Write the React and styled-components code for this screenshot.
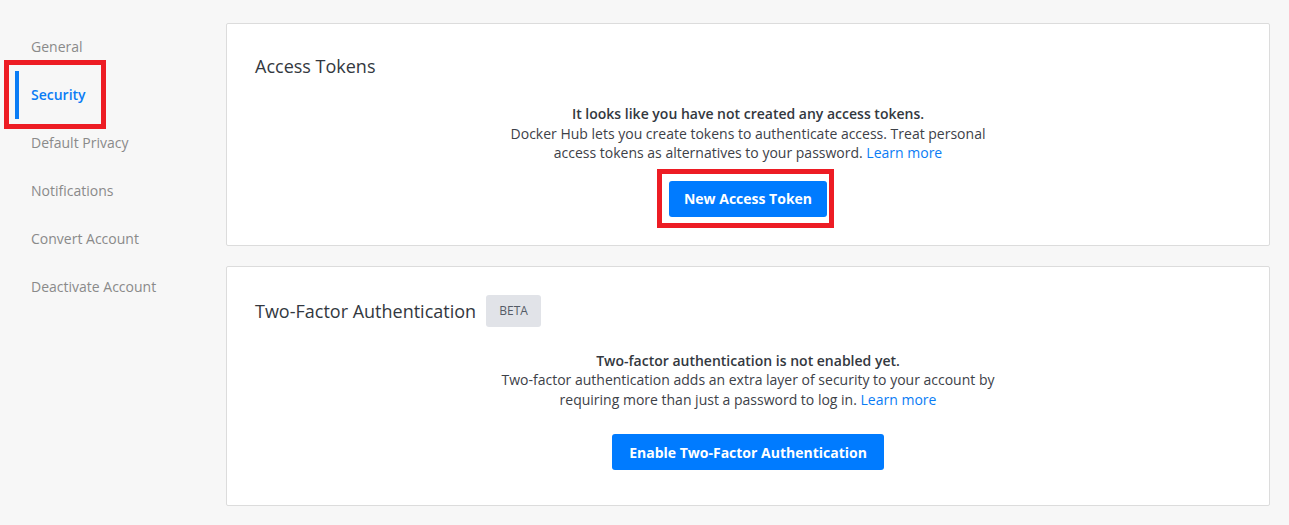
import React from 'react'
import styled, { createGlobalStyle } from 'styled-components'

const GlobalStyle = createGlobalStyle`
    body {
        margin: 0;
        background: #f7f7f7;
        font-family: "Open Sans", "Noto Sans", sans-serif;
    }
`

const navItems = ['General', 'Security', 'Default Privacy', 'Notifications', 'Convert Account', 'Deactivate Account']

const Settings = () => {
    return (
        <Page>
            <GlobalStyle />
            <SideNav>
                {navItems.map((item) => (
                    <NavItem key={item} active={item === 'Security'}>
                        {item}
                        {item === 'Security' && <Highlight inset='-11px 120px -10px 4px' />}
                    </NavItem>
                ))}
            </SideNav>
            <Main>
                <Card top='26px' bottom='28px'>
                    <CardTitle>Access Tokens</CardTitle>
                    <Body top='22px'>
                        <Lead>It looks like you have not created any access tokens.</Lead>
                        <Text>
                            Docker Hub lets you create tokens to authenticate access. Treat personal
                            access tokens as alternatives to your password. <Link href='#'>Learn more</Link>
                        </Text>
                        <Button gap='18px' width='158px'>
                            New Access Token
                            <Highlight inset='-12px -7px -11px -12px' />
                        </Button>
                    </Body>
                </Card>
                <Card top='28px' bottom='35px'>
                    <TitleRow>
                        <CardTitle>Two-Factor Authentication</CardTitle>
                        <Badge>BETA</Badge>
                    </TitleRow>
                    <Body top='24px'>
                        <Lead>Two-factor authentication is not enabled yet.</Lead>
                        <Text>
                            Two-factor authentication adds an extra layer of security to your account by
                            requiring more than just a password to log in. <Link href='#'>Learn more</Link>
                        </Text>
                        <Button gap='25px' width='272px'>Enable Two-Factor Authentication</Button>
                    </Body>
                </Card>
            </Main>
        </Page>
    )
}

const Page = styled.div`
    display: flex;
    align-items: flex-start;
    min-height: 525px;
    box-sizing: border-box;
    padding: 23px 19px 0 0;
`

const SideNav = styled.nav`
    width: 226px;
    flex-shrink: 0;
    display: flex;
    flex-direction: column;
`

const NavItem = styled.div`
    position: relative;
    height: 48px;
    box-sizing: border-box;
    padding: 0 0 2px 31px;
    display: flex;
    align-items: center;
    font-size: 14px;
    color: ${(p) => (p.active ? '#0a7cf5' : '#8a8a8a')};
    font-weight: ${(p) => (p.active ? 600 : 400)};
    &::before {
        content: '';
        display: ${(p) => (p.active ? 'block' : 'none')};
        position: absolute;
        left: 15px;
        top: 0;
        width: 4px;
        height: 48px;
        background: #0a7cf5;
    }
`

const Highlight = styled.span`
    position: absolute;
    inset: ${(p) => p.inset};
    border: 5px solid #ed1c24;
    pointer-events: none;
`

const Main = styled.main`
    flex: 1;
    display: flex;
    flex-direction: column;
    gap: 20px;
`

const Card = styled.section`
    background: #fff;
    border: 1px solid #dcdcdc;
    border-radius: 2px;
    padding: ${(p) => p.top} 28px ${(p) => p.bottom};
`

const TitleRow = styled.div`
    display: flex;
    align-items: center;
    gap: 10px;
`

const CardTitle = styled.h2`
    margin: 0;
    font-size: 18px;
    line-height: 32px;
    font-weight: 400;
    color: #333840;
`

const Badge = styled.span`
    display: inline-flex;
    align-items: center;
    justify-content: center;
    height: 32px;
    width: 55px;
    border-radius: 3px;
    background: #e1e3e8;
    color: #555b66;
    font-size: 12px;
`

const Body = styled.div`
    display: flex;
    flex-direction: column;
    align-items: center;
    text-align: center;
    margin-top: ${(p) => p.top};
`

const Lead = styled.div`
    font-size: 14px;
    line-height: 19.5px;
    font-weight: 600;
    color: #333840;
`

const Text = styled.p`
    margin: 0;
    max-width: 500px;
    font-size: 14px;
    line-height: 19.5px;
    color: #3d4148;
`

const Link = styled.a`
    color: #0a7cf5;
    text-decoration: none;
`

const Button = styled.button`
    position: relative;
    margin-top: ${(p) => p.gap};
    width: ${(p) => p.width};
    height: 36px;
    border: none;
    border-radius: 3px;
    background: #007bff;
    color: #fff;
    font-family: "Open Sans", "Noto Sans", sans-serif;
    font-size: 14px;
    font-weight: 700;
    cursor: pointer;
`

export default Settings
